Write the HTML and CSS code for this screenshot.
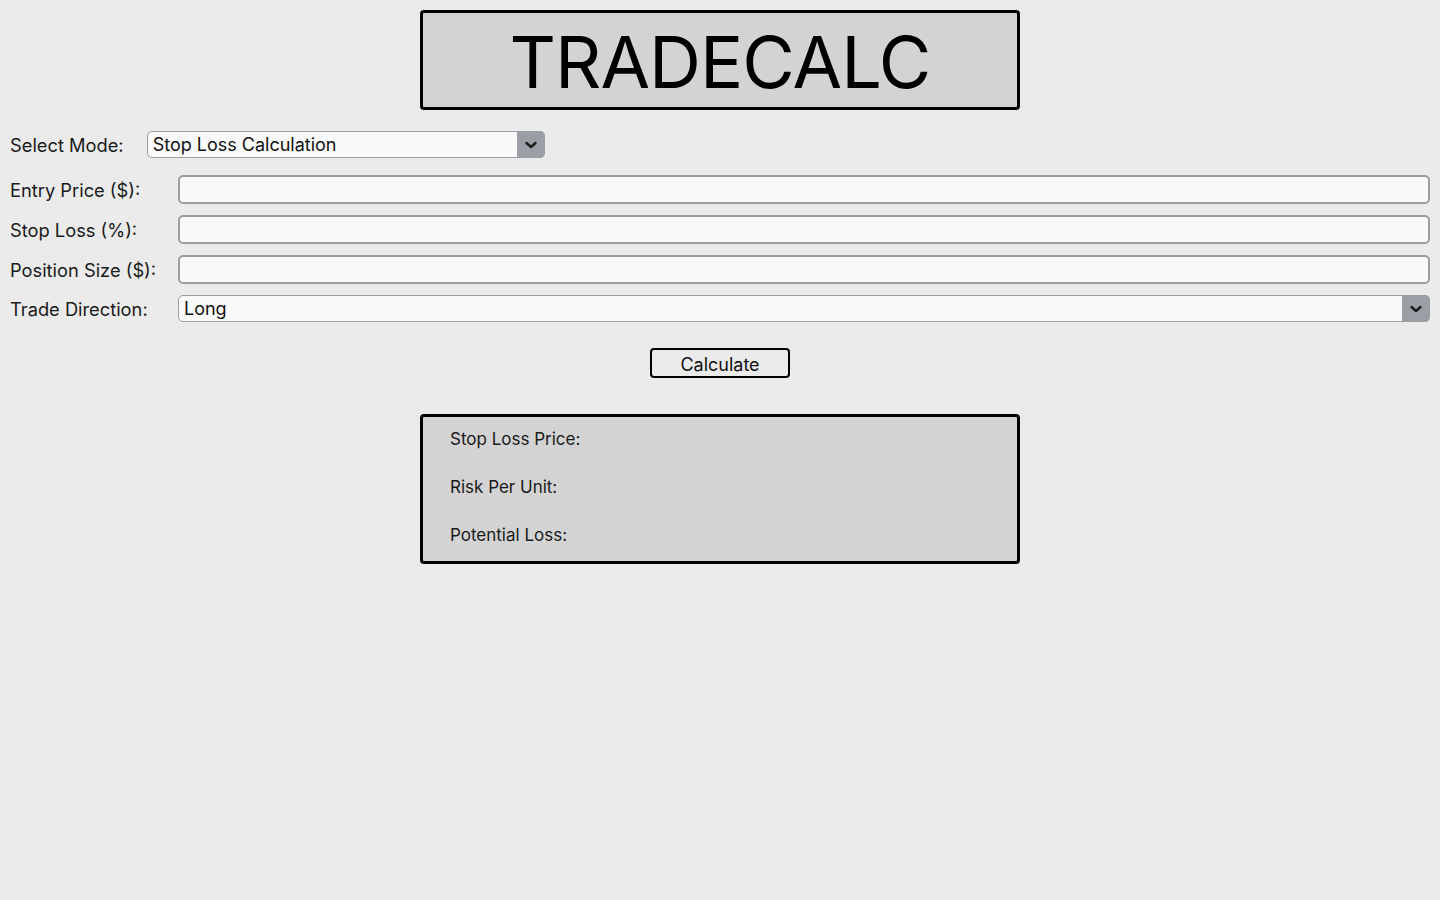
FILE: index.html
```html
<!DOCTYPE html>
<html lang="en">
<head>
<meta charset="utf-8">
<title>TradeCalc</title>
<link rel="stylesheet" href="styles.css">
</head>
<body>
<main class="app">
  <header class="title-box"><h1 class="title">TRADECALC</h1></header>

  <div class="mode-row">
    <label class="label" for="mode">Select Mode:</label>
    <div class="select-wrap mode-select">
      <select id="mode" class="select"><option>Stop Loss Calculation</option></select>
      <span class="select-arrow"><svg width="14" height="10" viewBox="0 0 14 10"><path d="M2.5 3 L7 7 L11.5 3" fill="none" stroke="#1c1c1c" stroke-width="2.4" stroke-linecap="round" stroke-linejoin="round"/></svg></span>
    </div>
  </div>

  <div class="form-grid">
    <label class="label" for="entry">Entry Price ($):</label>
    <input id="entry" class="input" type="text">
    <label class="label" for="stop">Stop Loss (%):</label>
    <input id="stop" class="input" type="text">
    <label class="label" for="size">Position Size ($):</label>
    <input id="size" class="input" type="text">
    <label class="label" for="dir">Trade Direction:</label>
    <div class="select-wrap">
      <select id="dir" class="select"><option>Long</option><option>Short</option></select>
      <span class="select-arrow"><svg width="14" height="10" viewBox="0 0 14 10"><path d="M2.5 3 L7 7 L11.5 3" fill="none" stroke="#1c1c1c" stroke-width="2.4" stroke-linecap="round" stroke-linejoin="round"/></svg></span>
    </div>
  </div>

  <div class="btn-row"><button class="btn" type="button">Calculate</button></div>

  <section class="results">
    <p class="result">Stop Loss Price:</p>
    <p class="result">Risk Per Unit:</p>
    <p class="result">Potential Loss:</p>
  </section>
</main>
</body>
</html>
```
FILE: styles.css
```css
* { box-sizing: border-box; }
html, body { margin: 0; padding: 0; }
body {
  background: #ebebeb;
  font-family: Inter, "Open Sans", Arial, sans-serif;
  color: #111;
  padding: 10px;
}
.app { display: flex; flex-direction: column; }

.title-box {
  width: 600px;
  height: 100px;
  margin: 0 auto;
  background: #d3d3d3;
  border: 3px solid #000;
  border-radius: 4px;
  display: flex;
  align-items: center;
  justify-content: center;
}
.title {
  margin: 0;
  padding-top: 4px;
  font-weight: 400;
  font-size: 72px;
  letter-spacing: -1px;
  line-height: 1;
  color: #000;
}

.label {
  font-size: 18.3px;
  color: #1a1a1a;
  white-space: nowrap;
}

.mode-row {
  display: flex;
  align-items: center;
  gap: 23px;
  margin-top: 21px;
  height: 27px;
}
.mode-select { width: 398px; }

.select-wrap {
  position: relative;
  height: 27px;
}
.select {
  -webkit-appearance: none;
  appearance: none;
  width: 100%;
  height: 100%;
  margin: 0;
  padding: 0 32px 0 5px;
  font-family: inherit;
  font-size: 18px;
  color: #111;
  background: #f9f9f9;
  border: 1px solid #9a9ea4;
  border-radius: 5px;
}
.select-arrow {
  position: absolute;
  top: 0;
  right: 0;
  width: 28px;
  height: 100%;
  background: #9a9fa5;
  border-radius: 0 5px 5px 0;
  display: flex;
  align-items: center;
  justify-content: center;
  pointer-events: none;
}

.form-grid {
  display: grid;
  grid-template-columns: 168px 1fr;
  row-gap: 11px;
  align-items: center;
  margin-top: 17px;
}
.input {
  height: 29px;
  margin: 0;
  background: #f9f9f9;
  border: 2px solid #9a9ea4;
  border-radius: 5px;
  font-family: inherit;
  font-size: 18px;
  padding: 0 5px;
}
.form-grid .select-wrap { height: 27px; }

.btn-row {
  display: flex;
  justify-content: center;
  margin-top: 26px;
}
.btn {
  width: 140px;
  height: 30px;
  margin: 0;
  background: transparent;
  border: 2px solid #000;
  border-radius: 4px;
  font-family: inherit;
  font-size: 18px;
  color: #111;
  padding: 0;
  padding-top: 2px;
}

.results {
  width: 600px;
  height: 150px;
  margin: 36px auto 0;
  background: #d3d3d3;
  border: 3px solid #000;
  border-radius: 4px;
  padding: 12px 27px;
  display: flex;
  flex-direction: column;
  gap: 27px;
}
.result {
  margin: 0;
  font-size: 17px;
  line-height: 21px;
  color: #1a1a1a;
}
```
